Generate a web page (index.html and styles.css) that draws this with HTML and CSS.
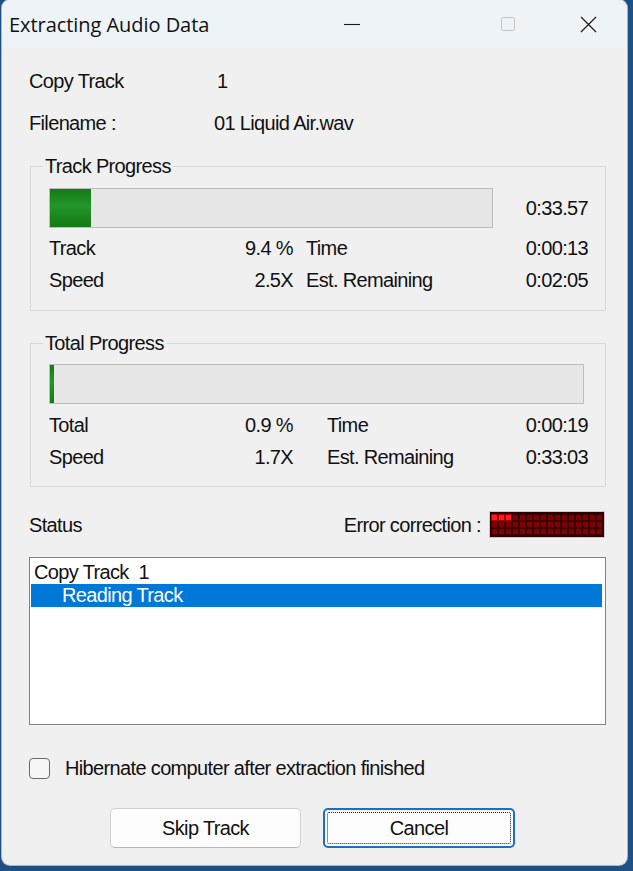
FILE: index.html
```html
<!DOCTYPE html>
<html>
<head>
<meta charset="utf-8">
<link rel="stylesheet" href="styles.css">
</head>
<body>
<div class="window">
  <div class="titlebar">
    <span class="title">Extracting Audio Data</span>
    <div class="caption">
      <svg class="cap-min" width="16" height="16" viewBox="0 0 16 16"><line x1="0" y1="8.5" x2="16" y2="8.5" stroke="#1a1a1a" stroke-width="1.1"/></svg>
      <svg class="cap-max" width="14" height="14" viewBox="0 0 14 14"><rect x="0.5" y="0.5" width="13" height="13" rx="2" fill="none" stroke="#c3c3c3" stroke-width="1"/></svg>
      <svg class="cap-close" width="17" height="17" viewBox="0 0 17 17"><path d="M1 1 L16 16 M16 1 L1 16" stroke="#1a1a1a" stroke-width="1.2" fill="none"/></svg>
    </div>
  </div>
  <div class="content">
    <div class="info"><span class="info-label">Copy Track</span><span class="info-value">1</span></div>
    <div class="info info-second"><span class="info-label">Filename :</span><span>01 Liquid Air.wav</span></div>

    <fieldset class="group group-track">
      <legend>Track Progress</legend>
      <div class="bar-row">
        <div class="bar"><div class="fill" style="width:41px"></div></div>
        <span class="bar-time">0:33.57</span>
      </div>
      <div class="stats">
        <span>Track</span><span class="num">9.4 %</span><span class="lbl2">Time</span><span class="num">0:00:13</span>
        <span>Speed</span><span class="num">2.5X</span><span class="lbl2">Est. Remaining</span><span class="num">0:02:05</span>
      </div>
    </fieldset>

    <fieldset class="group group-total">
      <legend>Total Progress</legend>
      <div class="bar-row">
        <div class="bar bar-total"><div class="fill" style="width:4px"></div></div>
      </div>
      <div class="stats">
        <span>Total</span><span class="num">0.9 %</span><span class="lbl2">Time</span><span class="num">0:00:19</span>
        <span>Speed</span><span class="num">1.7X</span><span class="lbl2">Est. Remaining</span><span class="num">0:33:03</span>
      </div>
    </fieldset>

    <div class="status-row">
      <span>Status</span>
      <div class="ec">
        <span>Error correction :</span>
        <div class="led">
          <i class="on"></i><i class="on"></i><i class="on"></i><i></i><i></i><i></i><i></i><i></i><i></i><i></i><i></i><i></i><i></i><i></i><i></i><i></i>
          <i></i><i></i><i></i><i></i><i></i><i></i><i></i><i></i><i></i><i></i><i></i><i></i><i></i><i></i><i></i><i></i>
          <i></i><i></i><i></i><i></i><i></i><i></i><i></i><i></i><i></i><i></i><i></i><i></i><i></i><i></i><i></i><i></i>
        </div>
      </div>
    </div>

    <div class="listbox">
      <div class="item">Copy Track  1</div>
      <div class="item selected">Reading Track</div>
    </div>

    <label class="check-row"><span class="checkbox"></span><span>Hibernate computer after extraction finished</span></label>

    <div class="buttons">
      <button class="btn">Skip Track</button>
      <button class="btn btn-default"><span class="focus">Cancel</span></button>
    </div>
  </div>
</div>
</body>
</html>
```

FILE: styles.css
```css
html, body {
  margin: 0;
  padding: 0;
}
body {
  width: 633px;
  height: 871px;
  overflow: hidden;
  background: #1e5083;
}
.window {
  margin-left: 2px;
  width: 625px;
  height: 865px;
  background: #f0f0f0;
  border-radius: 8px;
  overflow: hidden;
  box-shadow: 0 0 0 1px #a9b6c4;
}
.titlebar {
  height: 48px;
  background: #eef3f8;
  display: flex;
  align-items: center;
  padding-left: 7px;
}
.title {
  font-family: "Open Sans", "Noto Sans", sans-serif;
  font-size: 20px;
  color: #111;
  letter-spacing: -0.05px;
}
.caption {
  margin-left: auto;
  display: flex;
  align-items: center;
  padding-right: 30px;
}
.cap-min { margin-right: 141px; }
.cap-max { margin-right: 65px; }
.content {
  padding: 0 21px 0 27px;
  font-family: "Liberation Sans", Arial, sans-serif;
  font-size: 20px;
  letter-spacing: -0.65px;
  line-height: 22px;
  color: #111;
}
.info {
  display: flex;
  margin-top: 22px;
}
.info-second {
  margin-top: 20px;
}
.info-label {
  width: 185px;
}
.info-value {
  padding-left: 3px;
}
.group {
  margin: 21px 0 0 1px;
  padding: 0 17px 19px 18px;
  border: 1px solid #d8d8d8;
  min-width: 0;
}
.group-total {
  padding-bottom: 18px;
}
.group legend {
  margin-left: -6px;
  padding: 0 2px;
  line-height: 22px;
}
.bar-row {
  display: flex;
  align-items: center;
  margin-top: 11px;
}
.group-total .bar-row {
  margin-top: 10px;
}
.bar {
  flex: 1;
  height: 38px;
  border: 1px solid #bcbcbc;
  background: #e6e6e6;
  display: flex;
}
.bar-total {
  margin-right: 4px;
}
.fill {
  height: 100%;
  background: linear-gradient(#167a16, #24962a 45%, #1f8c22 60%, #167a16);
}
.bar-time {
  width: 95px;
  text-align: right;
}
.stats {
  display: grid;
  grid-template-columns: 180px 64px 1fr auto;
  row-gap: 10px;
  margin-top: 9px;
}
.group-total .stats {
  margin-top: 10px;
}
.stats .num {
  text-align: right;
}
.stats .lbl2 {
  padding-left: 13px;
}
.group-total .stats .lbl2 {
  padding-left: 34px;
}
.status-row {
  display: flex;
  justify-content: space-between;
  align-items: center;
  margin-top: 25px;
}
.ec {
  display: flex;
  align-items: center;
  margin-right: 2px;
}
.led {
  margin-left: 9px;
  display: grid;
  grid-template-columns: repeat(16, 7px);
  grid-template-rows: repeat(3, 7px);
  padding: 2px 1px;
  background: #2a0000;
  box-shadow: 0 0 0 1px #d0c8c8;
}
.led i {
  display: block;
  background: #7e0000;
  border: 1px solid #3a0000;
}
.led i.on {
  background: #ff1c1c;
  border-color: #a00000;
}
.listbox {
  margin-top: 20px;
  height: 163px;
  border: 1px solid #828282;
  background: #fff;
  padding: 3px 3px 0 1px;
}
.item {
  line-height: 23px;
  padding-left: 3px;
  white-space: pre;
}
.item.selected {
  background: #0078d7;
  color: #fff;
  padding-left: 31px;
}
.check-row {
  display: flex;
  align-items: center;
  margin-top: 32px;
  gap: 15px;
}
.checkbox {
  width: 19px;
  height: 19px;
  border: 1.5px solid #6a6a6a;
  border-radius: 4px;
  background: #f6f6f6;
}
.buttons {
  display: flex;
  gap: 22px;
  margin-top: 29px;
  margin-left: 81px;
}
.btn {
  width: 191px;
  height: 40px;
  border: 1px solid #d0d0d0;
  border-bottom-color: #b8b8b8;
  border-radius: 5px;
  background: #fdfdfd;
  font-family: "Liberation Sans", Arial, sans-serif;
  font-size: 20px;
  letter-spacing: -0.65px;
  color: #111;
  padding: 0;
}
.btn-default {
  width: 192px;
  border: 2px solid #1f6fc0;
  padding: 2px;
  display: flex;
}
.focus {
  flex: 1;
  border: 1px dotted #222;
  border-radius: 2px;
  display: flex;
  align-items: center;
  justify-content: center;
}
```
